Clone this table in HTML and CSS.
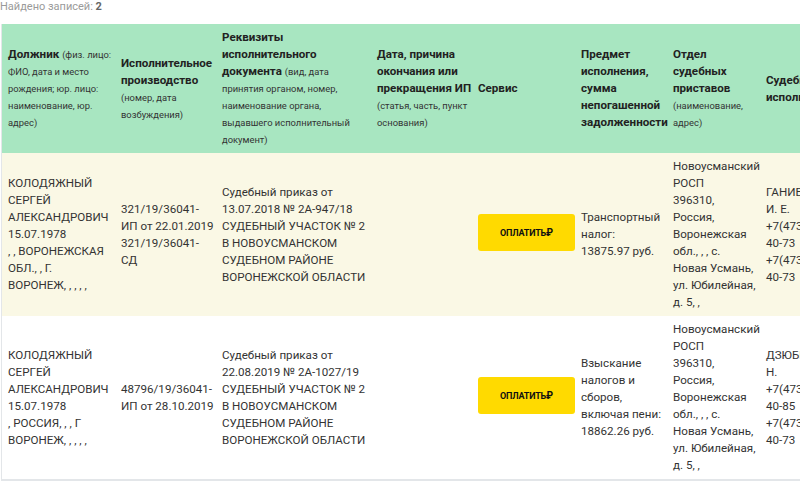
FILE: index.html
```html
<!DOCTYPE html>
<html lang="ru">
<head>
    <meta charset="UTF-8">
    <meta name="viewport" content="width=device-width, initial-scale=1.0">
    <title>Результаты поиска</title>
    <link rel="stylesheet" href="styles.css">
</head>
<body>
    <div class="found">Найдено записей: <b>2</b></div>

    <div class="results-wrap">
        <table class="results">
            <colgroup>
                <col class="c-debtor">
                <col class="c-proc">
                <col class="c-doc">
                <col class="c-end">
                <col class="c-service">
                <col class="c-subject">
                <col class="c-dept">
                <col class="c-bailiff">
            </colgroup>
            <thead>
                <tr>
                    <th>Должник <small>(физ. лицо: ФИО, дата и место рождения; юр. лицо: наименование, юр. адрес)</small></th>
                    <th>Исполнительное производство <small>(номер, дата возбуждения)</small></th>
                    <th>Реквизиты исполнительного документа <small>(вид, дата принятия органом, номер, наименование органа, выдавшего исполнительный документ)</small></th>
                    <th>Дата, причина окончания или прекращения ИП <small>(статья, часть, пункт основания)</small></th>
                    <th>Сервис</th>
                    <th>Предмет исполнения, сумма непогашенной задолженности</th>
                    <th>Отдел судебных приставов <small>(наименование, адрес)</small></th>
                    <th>Судебный пристав-исполнитель</th>
                </tr>
            </thead>
            <tbody>
                <tr class="odd">
                    <td class="debtor">КОЛОДЯЖНЫЙ СЕРГЕЙ АЛЕКСАНДРОВИЧ 15.07.1978<br>, , ВОРОНЕЖСКАЯ ОБЛ., , Г. ВОРОНЕЖ, , , , ,</td>
                    <td class="proc">321/19/36041-<span class="nw">ИП от 22.01.2019</span><br>321/19/36041-СД</td>
                    <td>Судебный приказ от 13.07.2018 № 2А-947/18 СУДЕБНЫЙ УЧАСТОК № 2 В НОВОУСМАНСКОМ СУДЕБНОМ РАЙОНЕ ВОРОНЕЖСКОЙ ОБЛАСТИ</td>
                    <td></td>
                    <td><button class="pay-btn">ОПЛАТИТЬ<span class="rub">₽</span></button></td>
                    <td class="subject">Транспортный налог: 13875.97 руб.</td>
                    <td class="dept">Новоусманский РОСП<br>396310, Россия, Воронежская обл., , , с. Новая Усмань, ул. Юбилейная, д. 5, ,</td>
                    <td class="nw">ГАНИЕВА<br>И. Е.<br>+7(47341)<br>40-73<br>+7(47341)<br>40-73</td>
                </tr>
                <tr>
                    <td class="debtor">КОЛОДЯЖНЫЙ СЕРГЕЙ АЛЕКСАНДРОВИЧ 15.07.1978<br>, РОССИЯ, , , Г ВОРОНЕЖ, , , , ,</td>
                    <td class="proc">48796/19/36041-<span class="nw">ИП от 28.10.2019</span></td>
                    <td>Судебный приказ от 22.08.2019 № 2А-1027/19 СУДЕБНЫЙ УЧАСТОК № 2 В НОВОУСМАНСКОМ СУДЕБНОМ РАЙОНЕ ВОРОНЕЖСКОЙ ОБЛАСТИ</td>
                    <td></td>
                    <td><button class="pay-btn">ОПЛАТИТЬ<span class="rub">₽</span></button></td>
                    <td class="subject">Взыскание налогов и сборов, включая пени: 18862.26 руб.</td>
                    <td class="dept">Новоусманский РОСП<br>396310, Россия, Воронежская обл., , , с. Новая Усмань, ул. Юбилейная, д. 5, ,</td>
                    <td class="nw">ДЗЮБЕНКО<br>Н.<br>+7(47341)<br>40-85<br>+7(47341)<br>40-73</td>
                </tr>
            </tbody>
        </table>
    </div>
</body>
</html>
```

FILE: styles.css
```css
body {
    margin: 0;
    font-family: Roboto, "Liberation Sans", Arial, sans-serif;
    color: #333;
    background: #fff;
    overflow: hidden;
}

.found {
    font-size: 11px;
    line-height: 13px;
    color: #9a9a9a;
    height: 24px;
}

.found b {
    color: #666;
}

.results-wrap {
    width: 900px;
    margin-left: 1px;
    border: 1px solid #e3e6e9;
    border-top: none;
    border-bottom-width: 2px;
}

.results {
    width: 900px;
    table-layout: fixed;
    border-collapse: collapse;
    font-size: 11.6px;
    line-height: 17px;
}

.c-debtor { width: 113px; }
.c-proc { width: 101px; }
.c-doc { width: 155px; }
.c-end { width: 101px; }
.c-service { width: 103px; }
.c-subject { width: 92px; }
.c-dept { width: 93px; }
.c-bailiff { width: 142px; }

.results th,
.results td {
    padding: 5px 0 5px 6px;
    vertical-align: middle;
    text-align: left;
}

.results th {
    background: #a8e6c1;
    font-size: 11.6px;
    font-weight: bold;
    color: #222;
}

.results th small {
    font-size: 9.4px;
    font-weight: normal;
    color: #333;
}

.results tr.odd td {
    background: #faf8e5;
}

.results td.debtor {
    padding-right: 6px;
}

.results td.proc {
    padding-right: 5px;
}

.results td.subject {
    padding-right: 5px;
}

.results td.dept {
    padding-right: 4px;
}

.nw {
    white-space: nowrap;
}

.pay-btn {
    display: block;
    width: 97px;
    height: 37px;
    margin-top: -5px;
    background: #ffda00;
    border: none;
    border-radius: 3px;
    font-family: Roboto, "Liberation Sans", Arial, sans-serif;
    font-size: 9px;
    font-weight: bold;
    color: #111;
    letter-spacing: -0.2px;
    cursor: pointer;
}

.pay-btn .rub {
    font-size: 10px;
}
```
